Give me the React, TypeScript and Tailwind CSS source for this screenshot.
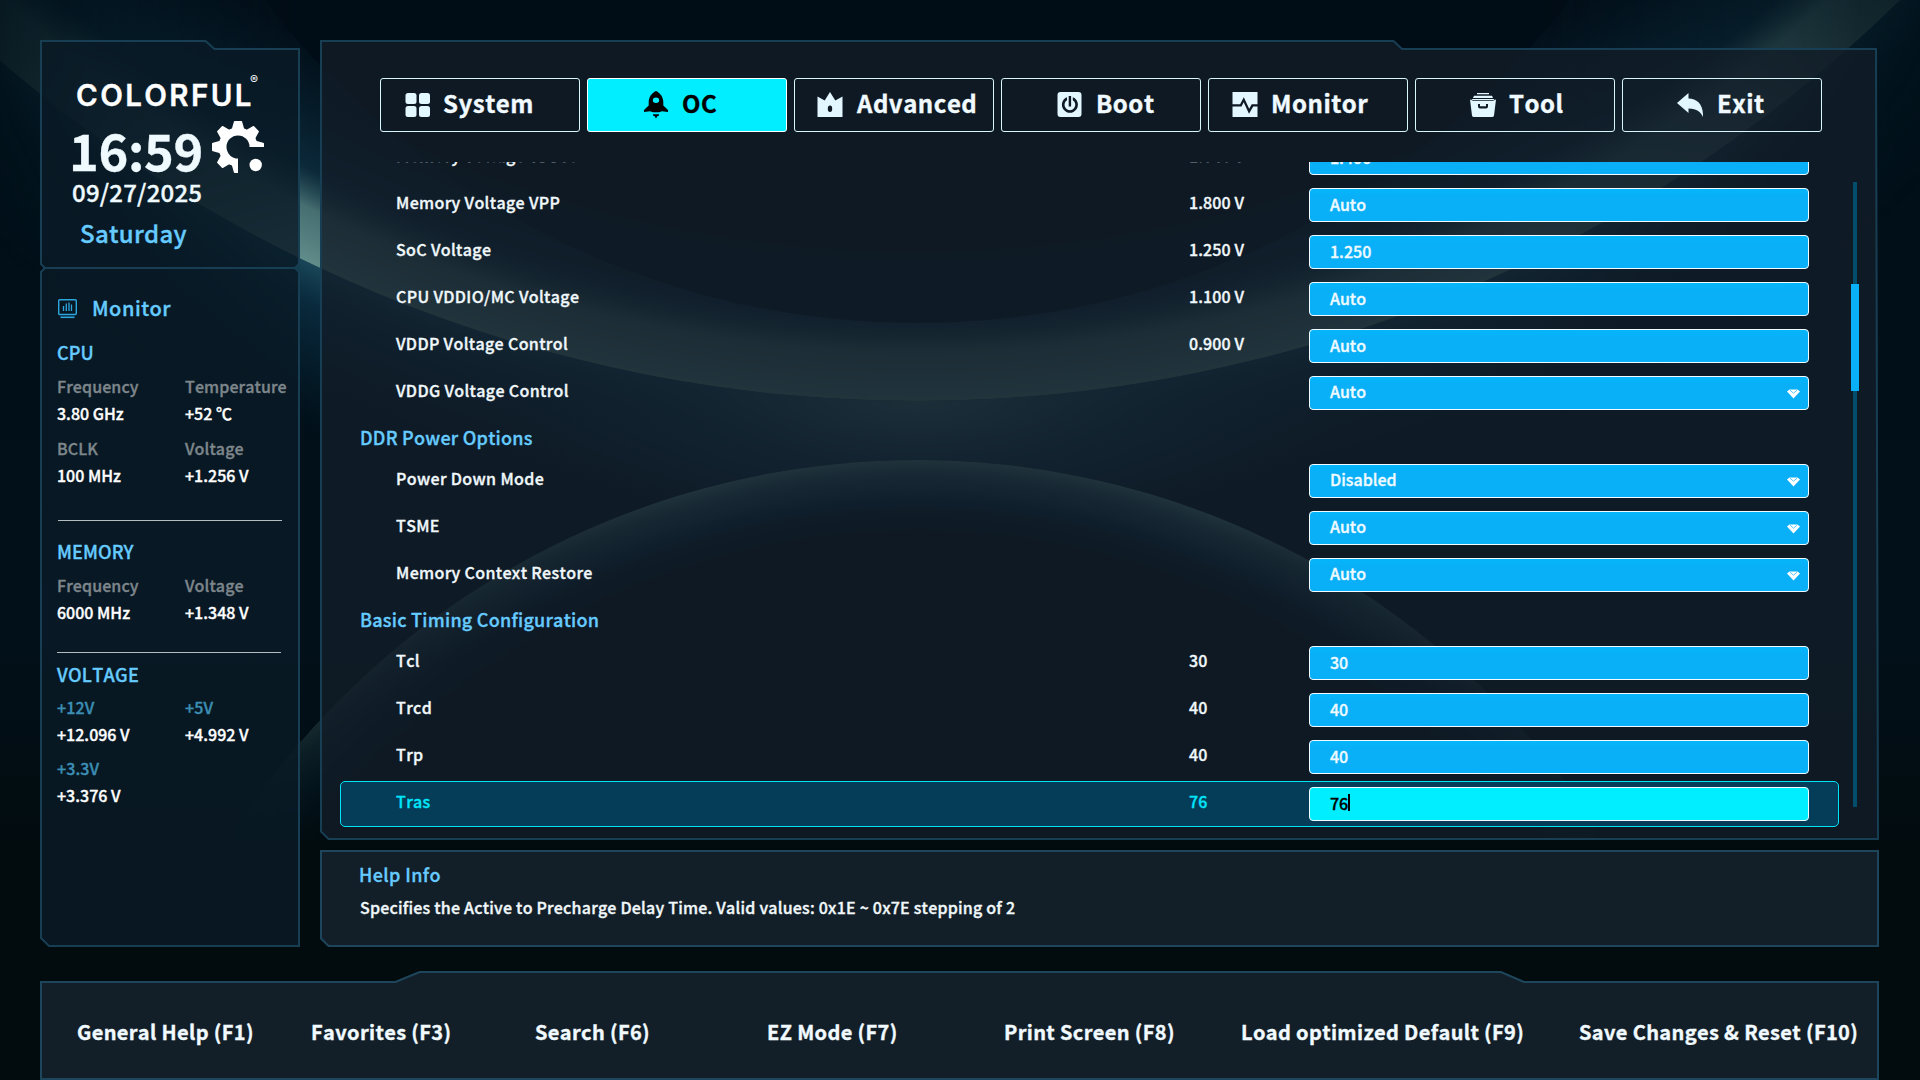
import type { ReactNode } from 'react';
import clsx from 'clsx';

type Option = {
  kind: 'option';
  label: string;
  current?: string;
  value: string;
  dropdown?: boolean;
  active?: boolean;
};
type Heading = { kind: 'heading'; label: string };

const rows: (Option | Heading)[] = [
  { kind: 'option', label: 'Memory Voltage VDDIO', current: '1.348 V', value: '1.400' },
  { kind: 'option', label: 'Memory Voltage VPP', current: '1.800 V', value: 'Auto' },
  { kind: 'option', label: 'SoC Voltage', current: '1.250 V', value: '1.250' },
  { kind: 'option', label: 'CPU VDDIO/MC Voltage', current: '1.100 V', value: 'Auto' },
  { kind: 'option', label: 'VDDP Voltage Control', current: '0.900 V', value: 'Auto' },
  { kind: 'option', label: 'VDDG Voltage Control', value: 'Auto', dropdown: true },
  { kind: 'heading', label: 'DDR Power Options' },
  { kind: 'option', label: 'Power Down Mode', value: 'Disabled', dropdown: true },
  { kind: 'option', label: 'TSME', value: 'Auto', dropdown: true },
  { kind: 'option', label: 'Memory Context Restore', value: 'Auto', dropdown: true },
  { kind: 'heading', label: 'Basic Timing Configuration' },
  { kind: 'option', label: 'Tcl', current: '30', value: '30' },
  { kind: 'option', label: 'Trcd', current: '40', value: '40' },
  { kind: 'option', label: 'Trp', current: '40', value: '40' },
  { kind: 'option', label: 'Tras', current: '76', value: '76', active: true },
];

const shortcuts = [
  'General Help (F1)',
  'Favorites (F3)',
  'Search (F6)',
  'EZ Mode (F7)',
  'Print Screen (F8)',
  'Load optimized Default (F9)',
  'Save Changes & Reset (F10)',
];

function TabIcon({ children }: { children: ReactNode }) {
  return (
    <svg viewBox="0 0 26 28" className="h-7 w-[26px] shrink-0" fill="currentColor">
      {children}
    </svg>
  );
}

const tabs: { label: string; pad: string; icon: ReactNode }[] = [
  {
    label: 'System',
    pad: 'pl-6 gap-3',
    icon: (
      <>
        <rect x="0.5" y="2" width="11" height="11" rx="2.5" />
        <rect x="14" y="2" width="11" height="11" rx="2.5" />
        <rect x="0.5" y="15" width="11" height="11" rx="2.5" />
        <rect x="14" y="15" width="11" height="11" rx="2.5" />
      </>
    ),
  },
  {
    label: 'OC',
    pad: 'pl-[55px] gap-[13px]',
    icon: (
      <path
        fillRule="evenodd"
        d="M13 0c4.500 2 7.300 6.500 7.300 11v3.500l4.700 4.500v2l-6-.8-3 1h-6l-3-1-6 .8v-2l4.700-4.500V11C5.700 6.500 8.500 2 13 0zM13 6.500a3.200 2.700 0 1 0 0 5.400 3.200 2.700 0 0 0 0-5.400zM10 23.300h6v1.200l-1.700.7L13 27.500l-1.300-2.300-1.700-.7z"
      />
    ),
  },
  {
    label: 'Advanced',
    pad: 'pl-[22px] gap-[14px]',
    icon: (
      <path
        fillRule="evenodd"
        d="M.5 5.500 7.700 9.500 13 1l5.300 8.500 7.200-4V26H.5zM13 14.500a2.200 3.200 0 1 0 0 6.400 2.200 3.200 0 0 0 0-6.400z"
      />
    ),
  },
  {
    label: 'Boot',
    pad: 'pl-[55px] gap-[13px]',
    icon: (
      <path
        fillRule="evenodd"
        d="M3.500 1h18a3 3 0 0 1 3 3v19a3 3 0 0 1-3 3h-18a3 3 0 0 1-3-3V4a3 3 0 0 1 3-3zM10 6.300a8 8 0 1 0 5.800 0v2.900a5.400 5.400 0 1 1-5.800 0zM11.700 5v10.500h2.400V5z"
      />
    ),
  },
  {
    label: 'Monitor',
    pad: 'pl-[23px] gap-[13px]',
    icon: (
      <path d="M.5 1h25v12.200h-5.800l-2.500 4.500-5.400-11.500-3.700 7H.5zM.5 15.500h9l2.200-4.200 5.300 11.500 4.200-7.300h4.300V26H.5z" />
    ),
  },
  {
    label: 'Tool',
    pad: 'pl-[54px] gap-[13px]',
    icon: (
      <path
        fillRule="evenodd"
        d="M7 2h12v1.300H7zM4 4.700h18l1 2.300H3zM2.500 8h21l1.200 1H1.300zM0 8.500 3 9.800h20l3-1.300-2 16a2 2 0 0 1-2 1.500H4a2 2 0 0 1-2-1.500zM8 13v2.500a2 2 0 0 0 2 2h6a2 2 0 0 0 2-2V13h-2v2.200h-6V13z"
      />
    ),
  },
  {
    label: 'Exit',
    pad: 'pl-[54px] gap-[14px]',
    icon: <path d="M0 12 11.500 2v5.600C20 8 26.500 13 26 26c-2-5-6-8.500-14.500-8.600V22z" />,
  },
];

// Glowing arcs behind the panels
function Backdrop() {
  return (
    <svg viewBox="0 0 1920 1080" className="absolute inset-0 h-full w-full">
      <defs>
        <radialGradient id="band" gradientUnits="userSpaceOnUse" cx="917" cy="-1005" r="1406">
          <stop offset="0.86" stopColor="#0a3048" stopOpacity="0" />
          <stop offset="0.94" stopColor="#154258" stopOpacity="0.5" />
          <stop offset="0.965" stopColor="#527f80" stopOpacity="0.85" />
          <stop offset="1" stopColor="#608c8a" />
        </radialGradient>
        <radialGradient id="under" gradientUnits="userSpaceOnUse" cx="917" cy="-1005" r="1560">
          <stop offset="0.9" stopColor="#1f5266" stopOpacity="0.85" />
          <stop offset="0.925" stopColor="#0f3c55" stopOpacity="0.6" />
          <stop offset="1" stopColor="#0a3048" stopOpacity="0" />
        </radialGradient>
        <radialGradient id="lens" gradientUnits="userSpaceOnUse" cx="917" cy="1275" r="815">
          <stop offset="0.9" stopColor="#010c14" stopOpacity="0" />
          <stop offset="0.95" stopColor="#0c3048" stopOpacity="0.8" />
          <stop offset="0.985" stopColor="#3a6872" stopOpacity="0.9" />
          <stop offset="1" stopColor="#5a8a88" />
        </radialGradient>
        <radialGradient id="core">
          <stop offset="0" stopColor="#4d7c80" stopOpacity="0.9" />
          <stop offset="0.5" stopColor="#1d4a5c" stopOpacity="0.6" />
          <stop offset="1" stopColor="#0a2c40" stopOpacity="0" />
        </radialGradient>
        <linearGradient id="fadeWide" x1="0" x2="1">
          <stop offset="0" stopColor="#fff" stopOpacity="0.1" />
          <stop offset="0.03" stopColor="#fff" stopOpacity="0.2" />
          <stop offset="0.155" stopColor="#fff" />
          <stop offset="0.8" stopColor="#fff" />
          <stop offset="0.97" stopColor="#fff" stopOpacity="0.2" />
          <stop offset="1" stopColor="#fff" stopOpacity="0.14" />
        </linearGradient>
        <linearGradient id="fadeLens" x1="0" x2="1">
          <stop offset="0.12" stopColor="#fff" stopOpacity="0" />
          <stop offset="0.18" stopColor="#fff" stopOpacity="0.3" />
          <stop offset="0.36" stopColor="#fff" />
          <stop offset="0.63" stopColor="#fff" />
          <stop offset="0.78" stopColor="#fff" stopOpacity="0.25" />
          <stop offset="0.84" stopColor="#fff" stopOpacity="0" />
        </linearGradient>
        <linearGradient id="base" x1="0" x2="0" y1="0" y2="1">
          <stop offset="0" stopColor="#010f18" />
          <stop offset="0.6" stopColor="#021019" />
          <stop offset="0.85" stopColor="#020a0c" />
          <stop offset="1" stopColor="#020b0e" />
        </linearGradient>
        <mask id="maskWide">
          <rect width="1920" height="1080" fill="url(#fadeWide)" />
        </mask>
        <mask id="maskLens">
          <rect width="1920" height="1080" fill="url(#fadeLens)" />
        </mask>
      </defs>
      <rect width="1920" height="1080" fill="url(#base)" />
      <g mask="url(#maskWide)">
        <circle cx="917" cy="-1005" r="1560" fill="url(#under)" />
        <ellipse cx="917" cy="400" rx="420" ry="150" fill="url(#core)" />
        <circle cx="917" cy="-1005" r="1406" fill="#02101a" />
        <circle cx="917" cy="-1005" r="1406" fill="url(#band)" />
        <circle cx="917" cy="-497" r="820" fill="#010d15" fillOpacity="0.8" />
      </g>
      <g mask="url(#maskLens)">
        <circle cx="917" cy="1275" r="815" fill="#020c13" />
        <circle cx="917" cy="1275" r="815" fill="url(#lens)" />
      </g>
      <rect y="840" width="1920" height="240" fill="#020b0d" />
    </svg>
  );
}

// Notched panel outline, drawn in the panel's own pixel units
function Frame({ d, fill, stroke = '#173e53' }: { d: string; fill: string; stroke?: string }) {
  return (
    <svg className="absolute inset-0 h-full w-full overflow-visible">
      <path d={d} fill={fill} stroke={stroke} strokeWidth="2" />
    </svg>
  );
}

function GearLogo() {
  return (
    <svg viewBox="-26 -26 52 52" className="mt-0.5 h-[52px] w-[52px]" fill="#fff">
      <defs>
        <mask id="gearCut">
          <rect x="-26" y="-26" width="52" height="52" fill="#fff" />
          <circle r="11.500" fill="#000" />
          <rect width="26" height="26" fill="#000" />
        </mask>
      </defs>
      <g mask="url(#gearCut)">
        <circle r="19.500" />
        {[0, 45, 90, 135, 180, 225, 270, 315].map((a) => (
          <path key={a} d="M-6.500 -17 -4.200 -25a1 1 0 0 1 1-1h6.400a1 1 0 0 1 1 1L6.500 -17z" transform={`rotate(${a})`} />
        ))}
      </g>
      <circle cx="17.700" cy="18" r="6.200" />
    </svg>
  );
}

function Reading({ name, value, dim = 'text-[#7d868b]' }: { name: string; value: string; dim?: string }) {
  return (
    <div className="w-32 shrink-0 whitespace-nowrap">
      <p className={clsx('leading-[27px] tracking-[0.1px]', dim)}>{name}</p>
      <p className="leading-[27px]">{value}</p>
    </div>
  );
}

function Sidebar() {
  const volt = 'text-[#3c8fb5]';
  return (
    <aside className="relative h-[907px] w-[260px] shrink-0">
      <Frame
        fill="rgba(10,26,38,0.84)"
        d="M1 1H165.500L174.500 9H259V224L255 228L259 232V906H9L1 898V232L5 228L1 224ZM3 228H257"
      />
      <div className="relative flex h-[228px] flex-col pl-8 text-[#effaff]">
        <div className="mt-[33px] flex h-[46px] items-start pl-1 font-['Inter',sans-serif] text-white">
          <span className="pt-1.5 text-[29.500px] leading-[32px] font-semibold tracking-[2.400px]">COLORFUL</span>
          <span className="-ml-1 text-[12px] leading-[14px] font-normal [-webkit-text-stroke-width:0]">®</span>
        </div>
        <div className="flex h-[55px] items-start">
          <span className="-ml-[3px] w-[143px] pt-[3px] text-[50.500px] leading-[54px] font-bold tracking-[-0.3px]">16:59</span>
          <GearLogo />
        </div>
        <p className="mt-1 text-2xl leading-7 tracking-[0.2px]">09/27/2025</p>
        <p className="mt-[9px] pl-2 text-2xl leading-9 tracking-[0.3px] text-[#66cbff]">Saturday</p>
      </div>

      <div className="relative pt-[25px] pl-[17px] text-white">
        <div className="flex h-7 items-center text-[#66cbff]">
          <svg viewBox="0 0 20 20" className="mt-1 ml-px h-5 w-5" fill="none" stroke="#2ba6e0">
            <rect x="0.700" y="0.700" width="17.600" height="14.800" rx="1" strokeWidth="1.400" />
            <path d="M5.500 12V7M8.300 12V4.500M11 12V3.500M13.500 12V5.500" strokeWidth="1.300" />
            <path d="M2.500 18.300h14" strokeWidth="1.600" />
          </svg>
          <span className="pt-0.5 pl-3.5 text-xl leading-7 tracking-[0.5px]">Monitor</span>
        </div>

        <h3 className="mt-[18px] text-lg leading-[27px] tracking-[0.1px] text-[#66cbff]">CPU</h3>
        <div className="mt-[7px] flex">
          <Reading name="Frequency" value="3.80 GHz" />
          <Reading name="Temperature" value="+52 ℃" />
        </div>
        <div className="mt-2 flex">
          <Reading name="BCLK" value="100 MHz" />
          <Reading name="Voltage" value="+1.256 V" />
        </div>
        <div className="mt-[31px] ml-px h-px w-56 bg-[#b4bcc0]" />

        <h3 className="mt-[17px] text-lg leading-[27px] tracking-[0.1px] text-[#66cbff]">MEMORY</h3>
        <div className="mt-[7px] flex">
          <Reading name="Frequency" value="6000 MHz" />
          <Reading name="Voltage" value="+1.348 V" />
        </div>
        <div className="mt-[26px] h-px w-56 bg-[#b4bcc0]" />

        <h3 className="mt-2 text-lg leading-[27px] tracking-[0.3px] text-[#66cbff]">VOLTAGE</h3>
        <div className="mt-[6px] flex">
          <Reading name="+12V" value="+12.096 V" dim={volt} />
          <Reading name="+5V" value="+4.992 V" dim={volt} />
        </div>
        <div className="mt-[7px] flex">
          <Reading name="+3.3V" value="+3.376 V" dim={volt} />
        </div>
      </div>
    </aside>
  );
}

function Tabs() {
  return (
    <nav className="flex gap-[7px] pl-[60px]">
      {tabs.map((tab) => {
        const selected = tab.label === 'OC';
        return (
          <button
            key={tab.label}
            type="button"
            className={clsx(
              'flex h-[54px] w-[200px] items-center rounded-[3px] border text-left',
              tab.pad,
              selected ? 'border-white bg-[#00eeff] text-black' : 'border-[#d8f7fa] text-[#e2f7ff]',
            )}
          >
            <TabIcon>{tab.icon}</TabIcon>
            <span className={clsx('-mt-1 text-2xl leading-8 font-bold tracking-[0.5px]', !selected && 'text-[#f0faff]')}>{tab.label}</span>
          </button>
        );
      })}
    </nav>
  );
}

function OptionRow({ row }: { row: Option }) {
  return (
    <div
      className={clsx(
        'mb-px flex h-[46px] w-[1499px] shrink-0 items-start rounded-[5px] border pt-[5px] pl-[55px]',
        row.active ? 'border-[#00e5fa] bg-[#053c58] text-[#00e5fa]' : 'border-transparent text-[#f0f8fb]',
      )}
    >
      <span className="w-[793px] leading-7 tracking-[0.35px]">{row.label}</span>
      <span className="w-[120px] leading-7 tracking-[0.1px]">{row.current}</span>
      <div
        className={clsx(
          'flex h-[34px] w-[500px] justify-between rounded-[4px] border border-[#f2fbff] pr-[8px] pl-5',
          row.active ? 'bg-[#00eeff] text-black' : 'bg-[#09aff7] bg-linear-to-b from-[#05b6fb] to-[#09aff7] to-25% text-[#eefaff]',
        )}
      >
        <span className={clsx('flex', row.dropdown ? 'leading-[29px]' : 'leading-[31px]')}>
          {row.value}
          {row.active && <i className="mt-[6px] h-[17px] w-[1.500px] bg-black" />}
        </span>
        {row.dropdown && (
          <svg viewBox="0 0 13 10" className="mt-3 h-[10px] w-[13px]">
            <path d="M2.500 0.500h8L13 2.500 6.500 9.500 0 2.500z" fill="#fff" />
            <path d="M3 1.200 6.500 4.200 10 1.200" fill="none" stroke="#5cc8fa" />
          </svg>
        )}
      </div>
    </div>
  );
}

function MainPanel() {
  return (
    <main className="relative h-[800px] w-[1559px]">
      <Frame fill="rgba(17,29,40,0.8)" d="M1 1H1073.500L1082 9H1556L1558 799H8.500L1 791.500Z" />
      <div className="relative pt-[38px]">
        <Tabs />
        <div className="mt-[30px] flex h-[665px] overflow-hidden pl-5">
          <div className="-mt-[27px] flex w-[1499px] flex-col">
            {rows.map((row) =>
              row.kind === 'heading' ? (
                <h3 key={row.label} className="h-[41px] shrink-0 pl-5 text-lg leading-[40px] tracking-[0.25px] text-[#66cbff]">
                  {row.label}
                </h3>
              ) : (
                <OptionRow key={row.label} row={row} />
              ),
            )}
          </div>
          <div className="mt-5 ml-3 flex h-[625px] w-2 flex-col items-center">
            <div className="h-[102px] w-1 bg-[#004d6c]" />
            <div className="h-[107px] w-2 bg-[#09aff7]" />
            <div className="grow w-1 bg-[#004d6c]" />
          </div>
        </div>
      </div>
    </main>
  );
}

function HelpPanel() {
  return (
    <section className="relative h-[97px] w-[1559px]">
      <Frame fill="#131f28" stroke="#1d465c" d="M1 1H1558V96H8.500L1 88.500Z" />
      <div className="relative pt-[11px] pl-[39px]">
        <h3 className="text-lg leading-[27px] tracking-[0.4px] text-[#66cbff]">Help Info</h3>
        <p className="mt-[6px] pl-px leading-[27px] tracking-[0.210px] text-[#f0f8fb]">
          Specifies the Active to Precharge Delay Time. Valid values: 0x1E ~ 0x7E stepping of 2
        </p>
      </div>
    </section>
  );
}

export default function App() {
  return (
    <div className="relative h-[1080px] w-[1920px] overflow-hidden bg-[#020b10] text-base font-medium font-['Noto_Sans_CJK_SC',sans-serif] [font-kerning:none] [-webkit-text-stroke-width:0.35px]">
      <Backdrop />
      <div className="relative flex h-full flex-col pt-10 pl-10">
        <div className="flex gap-5">
          <Sidebar />
          <div className="flex flex-col gap-[10px]">
            <MainPanel />
            <HelpPanel />
          </div>
        </div>
        <footer className="relative mt-6 h-[109px] w-[1839px]">
          <Frame fill="#131f28" stroke="#1d465c" d="M1 11H355.500L379.500 1H1461L1484 11H1838V108H1Z" />
          <div className="relative grid grid-cols-[234px_224px_232px_237px_237px_338px_auto] pt-[45px] pl-[37px] text-xl leading-8 font-bold tracking-[0.350px] whitespace-nowrap text-[#f0faff]">
            {shortcuts.map((s) => (
              <span key={s}>{s}</span>
            ))}
          </div>
        </footer>
      </div>
    </div>
  );
}
